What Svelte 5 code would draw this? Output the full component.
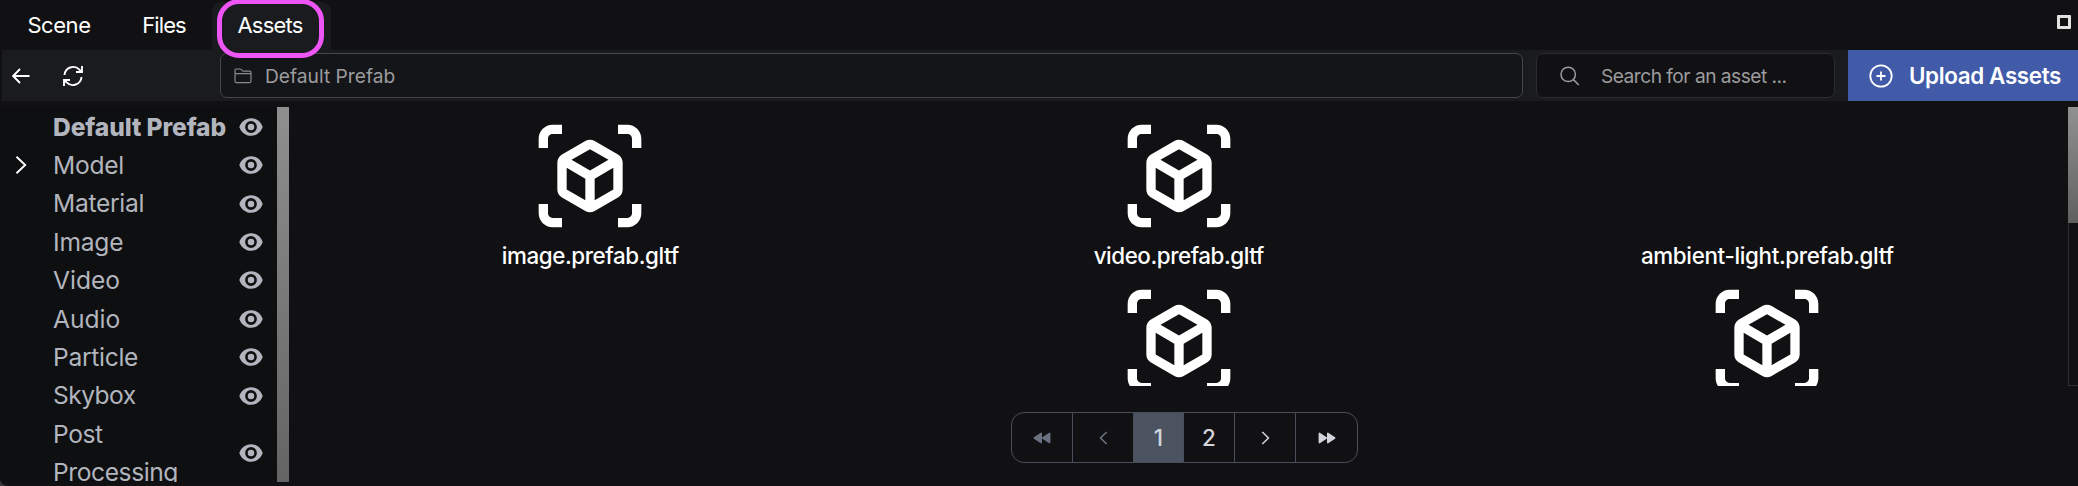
<script>
  const tabs = [
    { name: 'Scene', width: 114, spacing: -0.45 },
    { name: 'Files', width: 98, spacing: -0.9 },
    { name: 'Assets', width: 119, spacing: -0.8, active: true }
  ];

  const categories = [
    { name: 'Default Prefab', spacing: -0.1, selected: true },
    { name: 'Model', spacing: -0.25, expandable: true },
    { name: 'Material', spacing: -0.3 },
    { name: 'Image', spacing: -0.2 },
    { name: 'Video', spacing: 0 },
    { name: 'Audio', spacing: 0 },
    { name: 'Particle', spacing: -0.3 },
    { name: 'Skybox', spacing: -0.55 },
    { name: 'Post Processing', spacing: -0.42 }
  ];

  const assets = [
    { name: 'image.prefab.gltf', icon: true, spacing: -0.42 },
    { name: 'video.prefab.gltf', icon: true, spacing: -0.45 },
    { name: 'ambient-light.prefab.gltf', icon: false, spacing: -0.35 },
    { name: '', icon: false },
    { name: '', icon: true },
    { name: '', icon: true }
  ];
</script>

<div class="panel">
  <nav class="tabs">
    {#each tabs as tab}
      <button class="tab" class:active={tab.active} style="width:{tab.width}px">
        <span style="letter-spacing:{tab.spacing}px">{tab.name}</span>
        {#if tab.active}<i class="ring"></i>{/if}
      </button>
    {/each}
    <i class="maximize"></i>
  </nav>

  <header class="toolbar">
    <svg class="back" width="18" height="16" viewBox="0 0 18 16"><path d="M17.5 8H1.2M8 1 1.2 8 8 15" /></svg>
    <svg class="refresh" width="24" height="24" viewBox="0 0 24 24"><path d="M21 2v6h-6M3.5 11A8.7 8.7 0 0 1 18.4 5.6L21 8M3 22v-6h6M20.500 13A8.700 8.700 0 0 1 5.600 18.400L3 16" /></svg>
    <div class="path">
      <svg width="18" height="16" viewBox="0 0 18 16"><path d="M1 5.700V2.200Q1 1 2.200 1h3.900q.6 0 1 .4l1.300 1.300q.4.400 1 .400h6.200q1.400 0 1.400 1.400v8.700q0 1.500-1.500 1.500H2.500Q1 14.700 1 13.200V7q0-1.300 1.300-1.300h13.400Q17 5.700 17 7" /></svg>
      <span>Default Prefab</span>
    </div>
    <div class="search">
      <svg width="20" height="20" viewBox="0 0 20 20"><circle cx="8.200" cy="8.400" r="7.200" /><path d="m13.400 13.600 5.400 5.400" /></svg>
      <span>Search for an asset ...</span>
    </div>
    <button class="upload">
      <svg width="24" height="24" viewBox="0 0 24 24"><circle cx="12" cy="12" r="10.700" /><path d="M12 7.500v9M7.500 12h9" /></svg>
      <span>Upload Assets</span>
    </button>
  </header>

  <div class="body">
    <aside>
      <ul>
        {#each categories as c}
          <li class:selected={c.selected}>
            <span class="toggle">
              {#if c.expandable}
                <svg width="12" height="20" viewBox="0 0 12 20"><path d="m1.500 1.700 8.700 8.300-8.700 8.300" /></svg>
              {/if}
            </span>
            <span class="label" style="letter-spacing:{c.spacing}px">{c.name}</span>
            <svg class="eye" width="24" height="18" viewBox="0.200 2.650 19.600 14.700">
              <path fill-rule="evenodd" d="M.458 10C1.732 5.943 5.522 2.800 10 2.800s8.268 3.143 9.542 7.200c-1.274 4.057-5.064 7.200-9.542 7.200S1.732 14.057.458 10zM14.800 10a4.800 4.800 0 1 1-9.600 0 4.800 4.800 0 0 1 9.600 0z" />
              <circle cx="10" cy="10" r="2.650" />
            </svg>
          </li>
        {/each}
      </ul>
      <i class="side-thumb"></i>
    </aside>

    <main>
      <div class="scroller">
        <div class="grid">
          {#each assets as a}
            <div class="asset">
              <div class="thumb">
                {#if a.icon}
                  <svg width="112" height="112" viewBox="0 0 24 24">
                    <path d="M3 4c0-.55.45-1 1-1h2V1H4C2.340 1 1 2.340 1 4v2h2V4zm0 16v-2H1v2c0 1.660 1.340 3 3 3h2v-2H4c-.55 0-1-.45-1-1zM20 1h-2v2h2c.55 0 1 .45 1 1v2h2V4c0-1.660-1.340-3-3-3zm1 19c0 .55-.45 1-1 1h-2v2h2c1.660 0 3-1.340 3-3v-2h-2v2zM19 14.870V9.130c0-.72-.38-1.380-1-1.730l-5-2.880c-.31-.18-.65-.27-1-.27s-.69.09-1 .27L6 7.390c-.62.36-1 1.020-1 1.740v5.740c0 .72.38 1.380 1 1.730l5 2.880c.31.18.65.27 1 .27s.69-.09 1-.27l5-2.880c.62-.35 1-1.010 1-1.730zm-8 2.300-4-2.300v-4.630l4 2.330v4.600zm1-6.330L8.040 8.530 12 6.250l3.960 2.280L12 10.840zm5 4.030-4 2.300v-4.600l4-2.330v4.630z" />
                  </svg>
                {/if}
              </div>
              <div class="name" style="letter-spacing:{a.spacing ?? 0}px">{a.name}</div>
            </div>
          {/each}
        </div>
        <div class="track"><i></i></div>
      </div>

      <div class="footer">
        <div class="pager">
          <button class="off" style="width:61px">
            <svg width="18" height="12" viewBox="0 0 18 12"><path d="M8.200 1.400v9.200L1.400 6zM16.600 1.400v9.200L9.800 6z" /></svg>
          </button>
          <button class="off line" style="width:61px">
            <svg width="9" height="14" viewBox="0 0 9 14"><path d="M7.700 1 1.500 7l6.200 6" /></svg>
          </button>
          <button class="current" style="width:50px">1</button>
          <button style="width:51px">2</button>
          <button class="line" style="width:61px">
            <svg width="9" height="14" viewBox="0 0 9 14"><path d="m1.300 1 6.200 6-6.200 6" /></svg>
          </button>
          <button style="width:61px">
            <svg width="18" height="12" viewBox="0 0 18 12"><path d="M1.400 1.400v9.200L8.200 6zM9.800 1.400v9.200L16.600 6z" /></svg>
          </button>
        </div>
      </div>
    </main>
  </div>
</div>

<style>
  :global(body) { background: #111113; overflow: hidden; }
  .panel, .panel * { box-sizing: border-box; }
  .panel {
    width: 2078px; height: 486px; display: flex; flex-direction: column;
    background: #111113; color: #fff; overflow: hidden;
    font-family: Inter, "Liberation Sans", sans-serif;
    border-bottom-left-radius: 8px;
    box-shadow: 0 0 0 12px #38383a;
  }
  button { border: 0; margin: 0; padding: 0; background: none; color: inherit; font: inherit; }
  svg { display: block; flex: none; fill: none; stroke: currentColor; }
  i { display: block; }

  .tabs { display: flex; flex: none; height: 50px; align-items: flex-end; position: relative; z-index: 1; }
  .tab {
    position: relative; height: 48px; display: flex; align-items: center; justify-content: center;
    font-size: 22px; line-height: 32px; font-weight: 430; padding-bottom: 3px;
  }
  .tab:first-child { padding-left: 4px; }
  .tab:nth-child(2) { padding-left: 2px; }
  .tab.active { background: #1a1b1e; border-radius: 9px 9px 0 0; padding-right: 3px; }
  .ring { position: absolute; left: 5px; top: -3px; width: 107px; height: 59px; border: 5px solid #ee55f5; border-radius: 22px; }
  .maximize { width: 14px; height: 14px; margin: 0 7px 21px auto; border: 3px solid #e2e2e2; border-radius: 1px; }

  .toolbar { display: flex; flex: none; align-items: center; height: 51px; margin-left: 2px; background: #1a1b1e; }
  .back { margin-left: 10px; stroke-width: 1.9; }
  .refresh { margin-left: 31px; stroke-width: 1.9; }
  .path, .search { display: flex; align-items: center; height: 45px; border-radius: 7px; font-size: 19.200px; color: #9c9c9e; }
  .path { width: 1303px; margin-left: 135px; padding-left: 13px; background: #141519; border: 1px solid #45464b; }
  .path svg { stroke-width: 1.200; color: #8a8a8d; }
  .path span { margin-left: 13px; }
  .search { width: 299px; margin-left: 13px; padding-left: 22.500px; background: #111113; border: 1px solid #2b2c2f; }
  .search svg { stroke-width: 1.500; }
  .search span { margin-left: 21.500px; letter-spacing: -0.53px; white-space: nowrap; }
  .upload {
    display: flex; align-items: center; flex: 1; height: 51px; margin-left: 13px; padding-left: 21px;
    background: #415ba8; font-size: 22.400px; font-weight: 600; letter-spacing: -0.36px; white-space: nowrap;
  }
  .upload svg { stroke-width: 1.800; }
  .upload span { margin-left: 16px; padding-bottom: 1px; }

  .body { display: flex; height: 376px; margin-top: 6px; flex: none; }
  aside { display: flex; width: 289px; background: #0e0f11; overflow: hidden; height: 375px; }
  ul { list-style: none; margin: 0; padding: 0.500px 14px 0 15px; width: 277px; }
  li { display: flex; align-items: center; font-size: 24.600px; line-height: 38.400px; color: #b2b5bd; font-weight: 430; }
  .selected { font-weight: 800; }
  .toggle { width: 38px; color: #fff; flex: none; }
  .toggle svg { stroke-width: 1.900; }
  .label { width: 185.500px; flex: none; white-space: normal; padding-right: 10px; }
  .selected .label { padding-right: 0; }
  .eye { fill: currentColor; stroke: none; }
  .side-thumb { width: 12px; background: linear-gradient(#8f8f8f, #646464); }

  main { flex: 1; display: flex; flex-direction: column; }
  .scroller { display: flex; height: 279px; overflow: hidden; flex: none; }
  .grid { display: grid; grid-template-columns: repeat(3, 588.500px); grid-auto-rows: 165px; width: 1773px; padding-left: 7px; margin-right: 6px; }
  .asset { display: flex; flex-direction: column; align-items: center; padding-top: 12.600px; }
  .thumb { width: 112px; height: 112px; }
  .thumb svg { fill: #fff; stroke: none; }
  .name { margin-top: 7px; height: 33px; line-height: 33px; font-size: 22.400px; font-weight: 450; white-space: nowrap; }
  .track { width: 10px; border-left: 1px solid #2f2f31; border-bottom: 1px solid #2f2f31; }
  .track i { width: 10px; height: 116px; margin-left: -1px; background: linear-gradient(#919191, #606060); }

  .footer { display: flex; padding: 26px 0 0 722px; }
  .pager { display: flex; height: 51px; border: 1px solid #484e5a; border-radius: 13px; overflow: hidden; color: #d1d5db; font-size: 22.400px; font-weight: 500; }
  .pager button { display: flex; align-items: center; justify-content: center; border-right: 1px solid #484e5a; }
  .pager button:last-child { border-right: 0; }
  .pager svg { fill: currentColor; stroke-width: 1.600; stroke-linejoin: round; }
  .pager .line svg { fill: none; }
  .pager .off { color: #6b7180; }
  .pager .current { background: #4b5260; }
</style>
